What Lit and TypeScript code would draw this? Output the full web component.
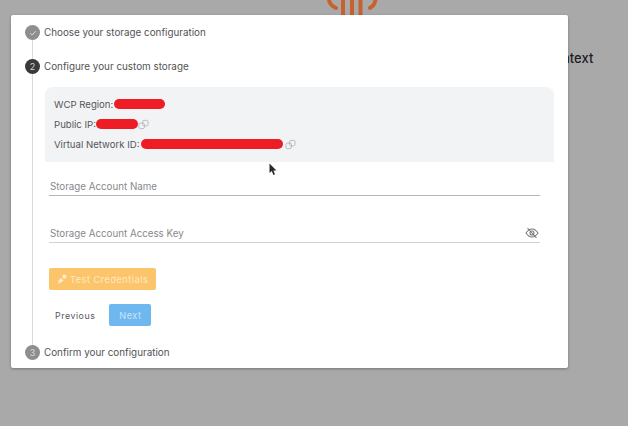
import { LitElement, html, css } from "lit";
import { customElement } from "lit/decorators.js";

const copyIcon = html`<svg class="copy" viewBox="0 0 12 12" width="11" height="11" fill="none" stroke="#b4b8bd" stroke-width="1"><rect x="1" y="4.5" width="6" height="6" rx="1.6"></rect><rect x="5" y="1.5" width="6" height="6" rx="1.6"></rect></svg>`;

@customElement("app-root")
export class AppRoot extends LitElement {
  static styles = css`
    :host {
      display: block;
      position: relative;
      width: 628px;
      height: 426px;
      overflow: hidden;
      background: #a9a9aa;
      font-family: "Inter", "Liberation Sans", sans-serif;
      color: #4e4e50;
    }
    .logo { position: absolute; left: 326px; top: 0; }
    .behind {
      position: absolute;
      left: 562px;
      top: 50px;
      font-size: 13px;
      font-weight: 500;
      color: #1d1d1f;
      line-height: 16px;
    }
    .modal {
      position: absolute;
      left: 11px;
      top: 15px;
      width: 557px;
      height: 353px;
      box-sizing: border-box;
      background: #fff;
      border-radius: 2px;
      box-shadow: 0 1px 3px rgba(0, 0, 0, 0.3);
      padding: 10px 14px 0 14px;
      display: flex;
      flex-direction: column;
    }
    .step {
      display: flex;
      align-items: center;
      gap: 4px;
      height: 15px;
      font-size: 9.85px;
      line-height: 15px;
      color: #525254;
      white-space: nowrap;
    }
    .dot {
      width: 15px;
      height: 15px;
      border-radius: 50%;
      flex: none;
      display: flex;
      align-items: center;
      justify-content: center;
      font-size: 9px;
      color: #d8d8d8;
      background: #8e8e8f;
    }
    .dot.active { background: #3a3a3b; color: #d4d4d4; }
    .gap {
      height: 19px;
      margin-left: 7px;
      border-left: 1px solid #d9d9da;
    }
    .body {
      margin-left: 7px;
      border-left: 1px solid #d9d9da;
      height: 271px;
      box-sizing: border-box;
      padding: 13px 14px 0 12px;
      display: flex;
      flex-direction: column;
      align-items: flex-start;
    }
    .panel {
      align-self: stretch;
      width: 509px;
      height: 75px;
      box-sizing: border-box;
      background: #f2f3f5;
      border-radius: 8px 8px 0 0;
      padding: 7px 9px;
      display: grid;
      grid-auto-rows: 20px;
      font-size: 9.6px;
      color: #55565a;
    }
    .row { display: flex; align-items: center; white-space: nowrap; }
    .red {
      height: 10px;
      border-radius: 5px;
      background: #ee1c25;
      flex: none;
    }
    .copy { flex: none; }
    .wcp .red { margin-left: 1px; width: 51px; }
    .pub .red { width: 42px; }
    .vn .red { margin-left: 2px; width: 142px; margin-right: 2px; }
    .field {
      width: 491px;
      margin-left: 4px;
      height: 20px;
      box-sizing: border-box;
      padding: 1px 1px 0 1px;
      display: flex;
      align-items: center;
      justify-content: space-between;
      font-size: 9.75px;
      color: #87888b;
      border-bottom: 1px solid #b5b5b6;
    }
    .field.one { margin-top: 14px; }
    .field.two { margin-top: 27px; border-bottom-color: #d2d2d3; }
    .test {
      margin: 25px 0 0 4px;
      width: 107px;
      height: 22px;
      box-sizing: border-box;
      background: #fcc56c;
      color: #fde9c4;
      border-radius: 2px;
      display: flex;
      align-items: center;
      gap: 3px;
      padding-left: 8px;
      font-size: 9.2px;
      letter-spacing: 0.5px;
    }
    .actions {
      margin: 14px 0 0 10px;
      display: flex;
      align-items: center;
      gap: 14px;
    }
    .prev { font-size: 8.8px; letter-spacing: 0.55px; color: #55565a; }
    .next {
      width: 42px;
      height: 22px;
      border-radius: 2px;
      background: #6fb8ef;
      color: #c8e5fa;
      display: flex;
      align-items: center;
      justify-content: center;
      font-size: 9.2px;
      letter-spacing: 0.5px;
    }
    .cursor { position: absolute; left: 269px; top: 163px; }
  `;

  render() {
    return html`
      <svg class="logo" width="54" height="16" viewBox="0 0 54 16" fill="none" stroke="#c8622d">
        <path d="M3 0 C3.5 3 5.5 6 10 8" stroke-width="4" stroke-linecap="round"></path>
        <path d="M49.5 0 C49 3 47.5 6 44 8" stroke-width="4" stroke-linecap="round"></path>
        <path d="M17 0V16M26 0V16M34.5 0V16" stroke-width="4"></path>
      </svg>
      <div class="behind">ntext</div>
      <div class="modal">
        <div class="step">
          <span class="dot">
            <svg width="8" height="8" viewBox="0 0 8 8" fill="none" stroke="#dcdcdc" stroke-width="1"><path d="M1.4 4.2 3.2 6 6.6 2.2"></path></svg>
          </span>Choose your storage configuration
        </div>
        <div class="gap"></div>
        <div class="step"><span class="dot active">2</span>Configure your custom storage</div>
        <div class="body">
          <div class="panel">
            <div class="row wcp">WCP Region:<span class="red"></span></div>
            <div class="row pub">Public IP:<span class="red"></span>${copyIcon}</div>
            <div class="row vn">Virtual Network ID:<span class="red"></span>${copyIcon}</div>
          </div>
          <div class="field one"><span>Storage Account Name</span></div>
          <div class="field two">
            <span>Storage Account Access Key</span>
            <svg width="14" height="12" viewBox="0 0 14 12" fill="none" stroke="#77787a" stroke-width="1.1">
              <path d="M1 6 C3 3 5 2 7 2 C9 2 11 3 13 6 C11 9 9 10 7 10 C5 10 3 9 1 6Z"></path>
              <circle cx="7" cy="6" r="2"></circle>
              <path d="M2.5 1 11.5 11"></path>
            </svg>
          </div>
          <div class="test">
            <svg width="10" height="10" viewBox="0 0 10 10" fill="#fdeed3">
              <path d="M0.5 9.5 2 8 1 7 4 4 6.5 6.5 3.5 9 2.6 8.4 1 10Z"></path>
              <rect x="5.6" y="0.8" width="3.6" height="3.6" rx="0.8"></rect>
            </svg>
            Test Credentials
          </div>
          <div class="actions">
            <span class="prev">Previous</span>
            <span class="next">Next</span>
          </div>
        </div>
        <div class="step"><span class="dot">3</span>Confirm your configuration</div>
      </div>
      <svg class="cursor" width="9" height="13" viewBox="0 0 9 13" fill="#2a2a2c"><path d="M0.5 0.5V10L2.8 8 4.4 12 6 11.3 4.4 7.6 7.5 7.4Z"></path></svg>
    `;
  }
}
